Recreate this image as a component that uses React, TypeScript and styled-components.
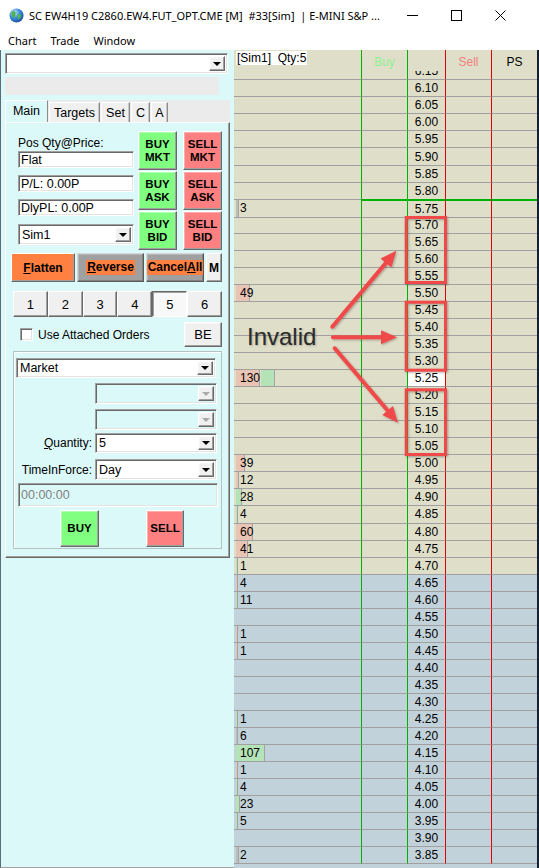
import React from "react";
import styled, { createGlobalStyle, css } from "styled-components";

const UI_FONT = `"Liberation Sans", Arial, sans-serif`;
const TITLE_FONT = `"Noto Sans", "Open Sans", sans-serif`;
const PANEL_BG = "#dcf9f9";

const GlobalStyle = createGlobalStyle`
  * { box-sizing: border-box; }
  html, body { margin: 0; padding: 0; background: #ffffff; }
  body { overflow: hidden; }
`;

const raised = css`
  border: 1px solid;
  border-color: #ffffff #696969 #696969 #ffffff;
  box-shadow: inset -1px -1px 0 #a0a0a0, inset 1px 1px 0 rgba(255, 255, 255, 0.35);
`;

const sunken = css`
  border: 1px solid;
  border-color: #a0a0a0 #ffffff #ffffff #a0a0a0;
  box-shadow: inset 1px 1px 0 #696969, inset -1px -1px 0 #e3e3e3;
`;

/* ---------- window chrome ---------- */

const Frame = styled.div`
  width: 539px;
  height: 868px;
  display: flex;
  flex-direction: column;
  overflow: hidden;
  background: #ffffff;
`;

const TitleBar = styled.div`
  height: 30px;
  flex: none;
  display: flex;
  align-items: center;
  padding-left: 9px;
  font-family: ${TITLE_FONT};
  font-size: 11px;
  color: #000;
`;

const AppIcon = styled.svg`
  flex: none;
  display: block;
`;

const TitleText = styled.div`
  margin-left: 5px;
  flex: 1;
  min-width: 0;
  white-space: nowrap;
  overflow: hidden;
`;

const WinControls = styled.div`
  flex: none;
  display: flex;
  height: 30px;
  margin-right: 17px;
`;

const WinButton = styled.div`
  width: 44px;
  display: flex;
  align-items: center;
  justify-content: center;
`;

const MenuBar = styled.div`
  height: 20px;
  flex: none;
  display: flex;
  align-items: center;
  gap: 14px;
  padding-left: 8px;
  font-family: ${TITLE_FONT};
  font-size: 11px;
  color: #000;
`;

const MenuItem = styled.span``;

const Body = styled.div`
  flex: 1;
  min-height: 0;
  display: flex;
`;

/* ---------- left order panel ---------- */

const LeftPanel = styled.div`
  width: 234px;
  flex: none;
  background: ${PANEL_BG};
  border-left: 1px solid #5d6b78;
  border-bottom: 1px solid #a0a0a0;
  padding: 3px 0 0 4px;
  display: flex;
  flex-direction: column;
  align-items: flex-start;
  font-family: ${UI_FONT};
  font-size: 12px;
  color: #000;
`;

const Combo = styled.div<{ $w: number; $h?: number; $disabled?: boolean }>`
  width: ${(p) => p.$w}px;
  height: ${(p) => p.$h ?? 21}px;
  ${sunken};
  background: ${(p) => (p.$disabled ? PANEL_BG : "#ffffff")};
  display: flex;
  align-items: center;
  padding: 2px 2px 2px 3px;
  font-size: 12.5px;
`;

const ComboValue = styled.span`
  flex: 1;
  white-space: nowrap;
  overflow: hidden;
`;

const DropButton = styled.span`
  width: 16px;
  align-self: stretch;
  ${raised};
  background: #f0f0f0;
  display: flex;
  align-items: center;
  justify-content: center;
`;

const DropArrow = styled.span<{ $disabled?: boolean }>`
  width: 0;
  height: 0;
  border-left: 4px solid transparent;
  border-right: 4px solid transparent;
  border-top: 4px solid ${(p) => (p.$disabled ? "#a8a8a8" : "#000")};
`;

const GreyBar = styled.div`
  width: 214px;
  height: 18px;
  margin-top: 3px;
  background: #ebebeb;
`;

const TabControl = styled.div`
  margin-top: 5px;
  width: 225px;
  display: flex;
  flex-direction: column;
`;

const TabStrip = styled.div`
  height: 22px;
  display: flex;
  align-items: flex-end;
  background: #ebebeb;
`;

const Tab = styled.div<{ $active?: boolean; $w: number }>`
  width: ${(p) => p.$w}px;
  height: ${(p) => (p.$active ? 22 : 20)}px;
  margin-right: 1px;
  background: ${(p) => (p.$active ? PANEL_BG : "#f0f0f0")};
  border: 1px solid;
  border-bottom: none;
  border-color: #ffffff #8a8a8a transparent #ffffff;
  box-shadow: ${(p) => (p.$active ? "none" : "inset -1px 0 0 #c8c8c8")};
  display: flex;
  justify-content: center;
  padding-top: 3px;
  line-height: 14px;
  font-size: 12.5px;
`;

const TabPage = styled.div`
  height: 436px;
  background: ${PANEL_BG};
  border: 1px solid;
  border-color: #ffffff #696969 #696969 #ffffff;
  box-shadow: inset -1px -1px 0 #a0a0a0;
  padding: 8px 0 0 5px;
  display: flex;
  flex-direction: column;
  align-items: flex-start;
`;

const TopSection = styled.div`
  display: flex;
  gap: 4px;
  padding-left: 7px;
`;

const InfoColumn = styled.div`
  width: 116px;
  display: flex;
  flex-direction: column;
`;

const FieldLabel = styled.div<{ $mt?: number }>`
  margin-top: ${(p) => p.$mt ?? 0}px;
  line-height: 14px;
  height: 14px;
  white-space: nowrap;
`;

const TextBox = styled.div<{ $mt?: number; $ml?: number; $w?: number; $h?: number; $disabled?: boolean }>`
  margin-top: ${(p) => p.$mt ?? 0}px;
  margin-left: ${(p) => p.$ml ?? 0}px;
  width: ${(p) => p.$w ?? 116}px;
  height: ${(p) => p.$h ?? 17}px;
  ${sunken};
  background: ${(p) => (p.$disabled ? PANEL_BG : "#ffffff")};
  color: ${(p) => (p.$disabled ? "#808080" : "#000")};
  display: flex;
  align-items: center;
  padding-left: 2px;
  font-size: 12.5px;
  white-space: nowrap;
`;

const ComboSlot = styled.div<{ $mt?: number }>`
  margin-top: ${(p) => p.$mt ?? 0}px;
`;

const OrderGrid = styled.div`
  display: grid;
  grid-template-columns: 39px 39px;
  grid-auto-rows: 39px;
  column-gap: 6px;
  row-gap: 1px;
`;

const OrderButton = styled.button<{ $tone: "buy" | "sell"; $w?: number; $h?: number }>`
  width: ${(p) => p.$w ?? 39}px;
  height: ${(p) => p.$h ?? 39}px;
  padding: 0;
  margin: 0;
  ${raised};
  background: ${(p) => (p.$tone === "buy" ? "#80ff80" : "#ff8080")};
  font-family: ${UI_FONT};
  font-weight: bold;
  font-size: 11.5px;
  line-height: 13px;
  color: #000;
  display: flex;
  flex-direction: column;
  align-items: center;
  justify-content: center;
`;

const ActionRow = styled.div`
  margin-top: 3px;
  height: 29px;
  display: flex;
  gap: 2px;
`;

const ActionButton = styled.button<{ $w: number; $kind: "orange" | "grey" | "plain" }>`
  width: ${(p) => p.$w}px;
  height: 29px;
  padding: 0;
  margin: 0;
  border: 1px solid;
  ${(p) =>
    p.$kind === "grey"
      ? css`
          border-color: #d4d4d4 #5a5a5a #5a5a5a #d4d4d4;
          box-shadow: inset -1px -1px 0 #808080, inset 1px 1px 0 #b8b8b8;
          background: #a0a0a0;
        `
      : css`
          border-color: #ffffff #696969 #696969 #ffffff;
          box-shadow: inset -1px -1px 0 #a0a0a0;
          background: ${p.$kind === "orange" ? "#ff8040" : "#f0f0f0"};
        `}
  font-family: ${UI_FONT};
  font-weight: bold;
  font-size: 12px;
  color: #000;
  display: flex;
  align-items: center;
  justify-content: center;
`;

const HighlightLabel = styled.span`
  background: #ff8040;
  padding: 1px 1px;
  line-height: 13px;
`;

const NumberRow = styled.div`
  margin-top: 9px;
  margin-left: 2px;
  width: 209px;
  height: 26px;
  display: grid;
  grid-template-columns: repeat(6, 1fr);
`;

const NumButton = styled.button<{ $active?: boolean }>`
  height: 26px;
  padding: 0;
  margin: 0;
  border: 1px solid;
  border-color: ${(p) => (p.$active ? "#696969 #ffffff #ffffff #696969" : "#ffffff #696969 #696969 #ffffff")};
  box-shadow: ${(p) => (p.$active ? "inset 1px 1px 0 #a0a0a0" : "inset -1px -1px 0 #a0a0a0")};
  background: ${(p) => (p.$active ? "#f8f8f8" : "#f0f0f0")};
  font-family: ${UI_FONT};
  font-size: 13px;
  color: #000;
`;

const CheckRow = styled.div`
  margin-top: 5px;
  width: 211px;
  height: 25px;
  display: flex;
  align-items: center;
`;

const CheckBox = styled.span`
  width: 13px;
  height: 13px;
  margin-left: 9px;
  ${sunken};
  background: #ffffff;
`;

const CheckLabel = styled.span`
  margin-left: 5px;
  font-size: 12px;
`;

const SmallButton = styled.button`
  margin: 0 0 0 auto;
  width: 38px;
  height: 25px;
  padding: 0;
  ${raised};
  background: #f0f0f0;
  font-family: ${UI_FONT};
  font-size: 13px;
  color: #000;
`;

const GroupBox = styled.div`
  margin-top: 4px;
  margin-left: 2px;
  width: 209px;
  height: 198px;
  border: 1px solid #b4c4c4;
  box-shadow: inset 1px 1px 0 #ffffff;
  padding: 6px 0 0 2px;
  display: flex;
  flex-direction: column;
  align-items: flex-start;
`;

const FieldRow = styled.div<{ $mt: number }>`
  margin-top: ${(p) => p.$mt}px;
  display: grid;
  grid-template-columns: 77px 122px;
  column-gap: 2px;
  align-items: center;
`;

const RowLabel = styled.span`
  text-align: right;
  padding-right: 1px;
  white-space: nowrap;
`;

const SubmitRow = styled.div`
  margin-top: 3px;
  margin-left: 44px;
  display: flex;
  gap: 47px;
`;

/* ---------- price ladder ---------- */

const Ladder = styled.div`
  flex: 1;
  min-width: 0;
  position: relative;
  display: flex;
  flex-direction: column;
  background: #c2d2da;
  overflow: hidden;
  font-family: ${UI_FONT};
  font-size: 12px;
  color: #000;
`;

const ladderColumns = css`
  display: grid;
  grid-template-columns: 127px 46px 38px 46px 46px;
`;

const HeaderRow = styled.div`
  ${ladderColumns};
  height: 21px;
  flex: none;
  background: #dfdfc9;
`;

const HeadCell = styled.div<{ $line?: string; $color?: string; $start?: boolean }>`
  border-left: ${(p) => (p.$line ? `1px solid ${p.$line}` : "0")};
  color: ${(p) => p.$color ?? "#000"};
  display: flex;
  justify-content: ${(p) => (p.$start ? "flex-start" : "center")};
  align-items: flex-start;
  padding-top: ${(p) => (p.$start ? 1 : 5)}px;
  line-height: 14px;
`;

const AccountTag = styled.span`
  margin-left: 2px;
  background: #ffffff;
  padding: 0 1px;
  height: 14px;
  line-height: 14px;
  white-space: pre;
`;

const RowsViewport = styled.div`
  flex: 1;
  min-height: 0;
  overflow: hidden;
`;

const RowList = styled.div`
  margin-top: -7.75px;
`;

const Row = styled.div<{ $lower: boolean }>`
  ${ladderColumns};
  height: 17.05px;
  background: ${(p) => (p.$lower ? "#c2d2da" : "#dfdfc9")};
`;

const Cell = styled.div<{ $line?: string; $sep?: string; $top?: string; $bg?: string }>`
  border-left: ${(p) => (p.$line ? `1px solid ${p.$line}` : "0")};
  border-bottom: 1px solid ${(p) => p.$sep ?? "#a0a0a0"};
  border-top: ${(p) => (p.$top ? `1px solid ${p.$top}` : "0")};
  background: ${(p) => p.$bg ?? "transparent"};
  display: flex;
  align-items: center;
  justify-content: center;
  line-height: 16px;
  min-width: 0;
`;

const VolCell = styled.div`
  position: relative;
  border-bottom: 1px solid #a0a0a0;
  display: flex;
  align-items: center;
  padding-left: 6px;
  line-height: 16px;
`;

const BarStack = styled.div`
  position: absolute;
  left: 2px;
  top: 0;
  bottom: 0;
  display: flex;
  gap: 1px;
`;

const Bar = styled.span<{ $color: string }>`
  flex: none;
  height: 100%;
  background: ${(p) => p.$color};
  border-right: 1px solid #a3a3a3;
`;

const VolText = styled.span`
  position: relative;
`;

const Overlay = styled.svg`
  position: absolute;
  left: 0;
  top: 0;
  pointer-events: none;
`;

const Callout = styled.div`
  position: absolute;
  left: 13px;
  top: 275px;
  font-family: ${UI_FONT};
  font-size: 24px;
  line-height: 24px;
  color: #2b2b2b;
  text-shadow: 1px 1px 2px rgba(0, 0, 0, 0.25);
`;

const RightEdge = styled.div`
  width: 2px;
  flex: none;
  background: #162033;
`;

/* ---------- data ---------- */

type Tone = "ask" | "bid" | "neutral";
const BAR_COLORS: Record<Tone, string> = {
  ask: "#e9c4b4",
  bid: "#b5e3b8",
  neutral: "#bdbdb4",
};

const VOLUMES: Record<string, { v: number; bars: [Tone, number][] }> = {
  "5.75": { v: 3, bars: [["neutral", 3]] },
  "5.50": { v: 49, bars: [["ask", 14]] },
  "5.25": { v: 130, bars: [["ask", 24], ["bid", 14]] },
  "5.00": { v: 39, bars: [["ask", 9]] },
  "4.95": { v: 12, bars: [["ask", 3]] },
  "4.90": { v: 28, bars: [["bid", 6]] },
  "4.85": { v: 4, bars: [["bid", 2]] },
  "4.80": { v: 60, bars: [["ask", 17]] },
  "4.75": { v: 41, bars: [["ask", 12]] },
  "4.70": { v: 1, bars: [["bid", 2]] },
  "4.65": { v: 4, bars: [["ask", 2]] },
  "4.60": { v: 11, bars: [["bid", 2]] },
  "4.50": { v: 1, bars: [["ask", 2]] },
  "4.45": { v: 1, bars: [["ask", 2]] },
  "4.25": { v: 1, bars: [["bid", 2]] },
  "4.20": { v: 6, bars: [["neutral", 2]] },
  "4.15": { v: 107, bars: [["bid", 29]] },
  "4.10": { v: 1, bars: [["ask", 2]] },
  "4.05": { v: 4, bars: [["bid", 2]] },
  "4.00": { v: 23, bars: [["bid", 4]] },
  "3.95": { v: 5, bars: [["bid", 2]] },
  "3.85": { v: 2, bars: [["neutral", 3]] },
};

const PRICES = Array.from({ length: 47 }, (_, i) => ((615 - 5 * i) / 100).toFixed(2));

const GREEN = "#00b000";
const RED = "#e00000";

/* ---------- small parts ---------- */

const Globe = () => (
  <AppIcon width="15" height="15" viewBox="0 0 16 16">
    <defs>
      <radialGradient id="globeG" cx="35%" cy="30%" r="75%">
        <stop offset="0" stopColor="#c8ecff" />
        <stop offset="0.5" stopColor="#3d8ed8" />
        <stop offset="1" stopColor="#1a4f9c" />
      </radialGradient>
    </defs>
    <circle cx="8" cy="8" r="7.5" fill="url(#globeG)" />
    <path d="M4 3.5c1.5-.5 3 .2 3.2 1.5.2 1.2-1 1.6-.6 2.8.4 1.2-.4 2.6-1.6 2.4C3.8 10 3 8.6 2.8 7.2 2.6 5.6 3 4 4 3.5z" fill="#4fb34f" />
    <path d="M9.5 6.5c1-.4 2.6 0 3.3 1 .6 1-.2 2.4-1 3.3-.8.9-1.6 1.6-2.2 1-.6-.7.3-1.8-.2-2.8-.4-1 .1-2.1.1-2.5z" fill="#4fb34f" />
  </AppIcon>
);

const ComboBox = ({ w, h, value, disabled }: { w: number; h?: number; value?: string; disabled?: boolean }) => (
  <Combo $w={w} $h={h} $disabled={disabled}>
    <ComboValue>{value ?? ""}</ComboValue>
    <DropButton>
      <DropArrow $disabled={disabled} />
    </DropButton>
  </Combo>
);

const LadderRow = ({ price }: { price: string }) => {
  const lower = parseFloat(price) < 4.675;
  const vol = VOLUMES[price];
  const sep = price === "5.80" ? GREEN : undefined;
  const top = price === "5.75" ? GREEN : undefined;
  return (
    <Row $lower={lower}>
      <VolCell>
        {vol && (
          <>
            <BarStack>
              {vol.bars.map(([tone, w], i) => (
                <Bar key={i} $color={BAR_COLORS[tone]} style={{ width: w }} />
              ))}
            </BarStack>
            <VolText>{vol.v}</VolText>
          </>
        )}
      </VolCell>
      <Cell $line={GREEN} $sep={sep} $top={top} />
      <Cell $line={GREEN} $sep={sep} $top={top} $bg={price === "5.25" ? "#ffffff" : undefined}>
        {price}
      </Cell>
      <Cell $line={RED} $sep={sep} $top={top} />
      <Cell $line={RED} $sep={sep} $top={top} />
    </Row>
  );
};

const Annotations = () => (
  <Overlay width="303" height="818" viewBox="0 0 303 818">
    <defs>
      <filter id="annShadow" x="-20%" y="-20%" width="140%" height="140%">
        <feDropShadow dx="1" dy="1" stdDeviation="1" floodColor="#000" floodOpacity="0.3" />
      </filter>
    </defs>
    <g filter="url(#annShadow)">
      <g fill="none" stroke="#f04848" strokeWidth="3">
        <rect x="172.2" y="167.5" width="39.3" height="65" />
        <rect x="172.2" y="252.2" width="39.3" height="68" />
        <rect x="172.2" y="339.8" width="39.3" height="64.7" />
      </g>
      <g stroke="#f04848" strokeWidth="4" strokeLinecap="round">
        <line x1="98.3" y1="276.7" x2="152" y2="212.9" />
        <line x1="99" y1="287.3" x2="148" y2="287.3" />
        <line x1="100.7" y1="298.3" x2="153.6" y2="360.5" />
      </g>
      <g fill="#f04848">
        <polygon points="162.3,200.7 157.4,217.4 146.6,208.4" />
        <polygon points="163,287.3 147,280.3 147,294.3" />
        <polygon points="164,372.7 148.3,365 158.9,356" />
      </g>
    </g>
  </Overlay>
);

export default function App() {
  return (
    <>
      <GlobalStyle />
      <Frame>
        <TitleBar>
          <Globe />
          <TitleText>SC EW4H19 C2860.EW4.FUT_OPT.CME [M]&nbsp; #33[Sim]&nbsp; | E-MINI S&amp;P ...</TitleText>
          <WinControls>
            <WinButton>
              <svg width="11" height="11" viewBox="0 0 11 11">
                <line x1="0" y1="5.5" x2="11" y2="5.5" stroke="#000" strokeWidth="1" />
              </svg>
            </WinButton>
            <WinButton>
              <svg width="11" height="11" viewBox="0 0 11 11">
                <rect x="0.5" y="0.5" width="10" height="10" fill="none" stroke="#000" strokeWidth="1" />
              </svg>
            </WinButton>
            <WinButton>
              <svg width="11" height="11" viewBox="0 0 11 11">
                <path d="M0.5 0.5L10.5 10.5M10.5 0.5L0.5 10.5" stroke="#000" strokeWidth="1" />
              </svg>
            </WinButton>
          </WinControls>
        </TitleBar>
        <MenuBar>
          <MenuItem>Chart</MenuItem>
          <MenuItem>Trade</MenuItem>
          <MenuItem>Window</MenuItem>
        </MenuBar>
        <Body>
          <LeftPanel>
            <ComboBox w={223} />
            <GreyBar />
            <TabControl>
              <TabStrip>
                <Tab $active $w={43}>Main</Tab>
                <Tab $w={51}>Targets</Tab>
                <Tab $w={29}>Set</Tab>
                <Tab $w={19}>C</Tab>
                <Tab $w={17}>A</Tab>
              </TabStrip>
              <TabPage>
                <TopSection>
                  <InfoColumn>
                    <FieldLabel $mt={5}>Pos Qty@Price:</FieldLabel>
                    <TextBox $mt={1}>Flat</TextBox>
                    <TextBox $mt={7}>P/L: 0.00P</TextBox>
                    <TextBox $mt={7}>DlyPL: 0.00P</TextBox>
                    <ComboSlot $mt={8}>
                      <ComboBox w={116} value="Sim1" />
                    </ComboSlot>
                  </InfoColumn>
                  <OrderGrid>
                    <OrderButton $tone="buy"><span>BUY</span><span>MKT</span></OrderButton>
                    <OrderButton $tone="sell"><span>SELL</span><span>MKT</span></OrderButton>
                    <OrderButton $tone="buy"><span>BUY</span><span>ASK</span></OrderButton>
                    <OrderButton $tone="sell"><span>SELL</span><span>ASK</span></OrderButton>
                    <OrderButton $tone="buy"><span>BUY</span><span>BID</span></OrderButton>
                    <OrderButton $tone="sell"><span>SELL</span><span>BID</span></OrderButton>
                  </OrderGrid>
                </TopSection>
                <ActionRow>
                  <ActionButton $w={64} $kind="orange">
                    <span><u>F</u>latten</span>
                  </ActionButton>
                  <ActionButton $w={67} $kind="grey">
                    <HighlightLabel><u>R</u>everse</HighlightLabel>
                  </ActionButton>
                  <ActionButton $w={58} $kind="grey">
                    <HighlightLabel>Cancel<u>A</u>ll</HighlightLabel>
                  </ActionButton>
                  <ActionButton $w={16} $kind="plain">M</ActionButton>
                </ActionRow>
                <NumberRow>
                  {["1", "2", "3", "4", "5", "6"].map((n) => (
                    <NumButton key={n} $active={n === "5"}>{n}</NumButton>
                  ))}
                </NumberRow>
                <CheckRow>
                  <CheckBox />
                  <CheckLabel>Use Attached Orders</CheckLabel>
                  <SmallButton>BE</SmallButton>
                </CheckRow>
                <GroupBox>
                  <ComboBox w={200} h={20} value="Market" />
                  <FieldRow $mt={5}>
                    <RowLabel />
                    <ComboBox w={122} disabled />
                  </FieldRow>
                  <FieldRow $mt={5}>
                    <RowLabel />
                    <ComboBox w={122} disabled />
                  </FieldRow>
                  <FieldRow $mt={3}>
                    <RowLabel><u>Q</u>uantity:</RowLabel>
                    <ComboBox w={122} h={20} value="5" />
                  </FieldRow>
                  <FieldRow $mt={6}>
                    <RowLabel>TimeInForce:</RowLabel>
                    <ComboBox w={122} value="Day" />
                  </FieldRow>
                  <TextBox $mt={3} $ml={2} $w={200} $h={24} $disabled>00:00:00</TextBox>
                  <SubmitRow>
                    <OrderButton $tone="buy" $h={37}>BUY</OrderButton>
                    <OrderButton $tone="sell" $w={38} $h={37}>SELL</OrderButton>
                  </SubmitRow>
                </GroupBox>
              </TabPage>
            </TabControl>
          </LeftPanel>
          <Ladder>
            <HeaderRow>
              <HeadCell $start>
                <AccountTag>[Sim1]  Qty:5</AccountTag>
              </HeadCell>
              <HeadCell $line={GREEN} $color="#90ee90">Buy</HeadCell>
              <HeadCell $line={GREEN} />
              <HeadCell $line={RED} $color="#f08080">Sell</HeadCell>
              <HeadCell $line={RED}>PS</HeadCell>
            </HeaderRow>
            <RowsViewport>
              <RowList>
                {PRICES.map((p) => (
                  <LadderRow key={p} price={p} />
                ))}
              </RowList>
            </RowsViewport>
            <Annotations />
            <Callout>Invalid</Callout>
          </Ladder>
          <RightEdge />
        </Body>
      </Frame>
    </>
  );
}
